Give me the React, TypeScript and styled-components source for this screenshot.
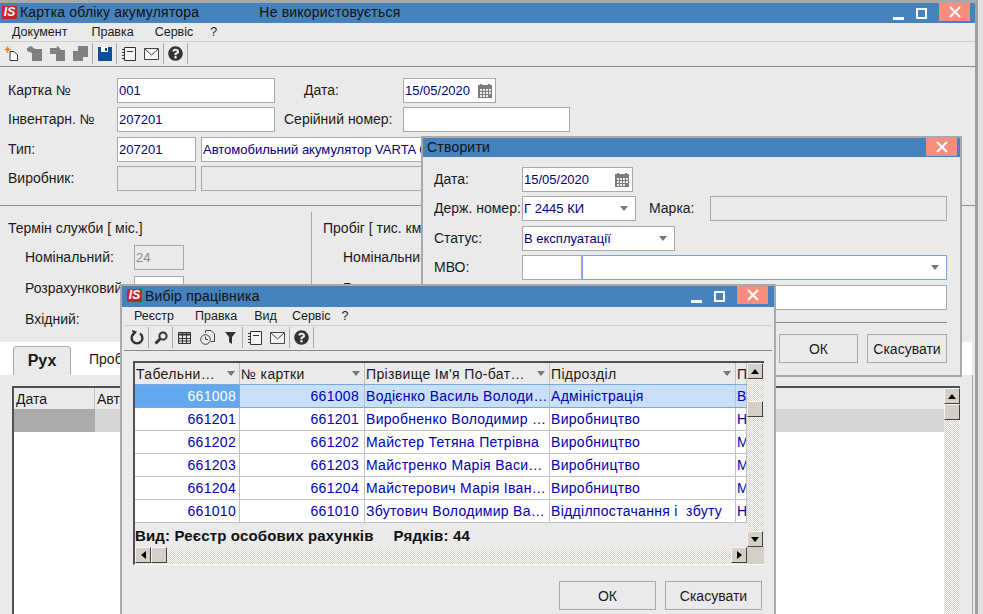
import React from 'react';
import styled, { createGlobalStyle } from 'styled-components';
import { FaQuestionCircle } from 'react-icons/fa';

const GlobalStyle = createGlobalStyle`
  html, body {
    margin: 0;
    padding: 0;
    overflow: hidden;
    background: #e2e2e2;
  }
  * {
    box-sizing: border-box;
  }
`;

const COLUMNS = [105, 125, 185, 186, 11];

const EMPLOYEES = [
  ['661008', '661008', 'Водієнко Василь Володи…', 'Адміністрація', 'В'],
  ['661201', '661201', 'Виробненко Володимир …', 'Виробництво', 'Н'],
  ['661202', '661202', 'Майстер Тетяна Петрівна', 'Виробництво', 'М'],
  ['661203', '661203', 'Майстренко Марія Васи…', 'Виробництво', 'М'],
  ['661204', '661204', 'Майстерович Марія Іван…', 'Виробництво', 'М'],
  ['661010', '661010', 'Збутович Володимир Ва…', 'Відділпостачання і  збуту', 'Н'],
];

const NewIcon = () => (
  <svg width="15" height="15" viewBox="0 0 15 15">
    <path d="M6 5.5H10L13.5 9V14.5H6Z" fill="#fff" stroke="#333" />
    <path d="M3.5 0.5V7M0.5 3.5H7M1.5 1.5L5.5 5.5M5.5 1.5L1.5 5.5" stroke="#e08a1e" strokeWidth="1" />
  </svg>
);

const GreyDocIcon = () => (
  <svg width="15" height="15" viewBox="0 0 15 15">
    <path d="M0 2L4 0L8 3H15V15H5V7L0 5Z" fill="#808080" />
  </svg>
);

const GreyCopyIcon = () => (
  <svg width="15" height="15" viewBox="0 0 15 15">
    <path d="M0 2H6L8 0L11 4H15V15H6V8H0Z" fill="#808080" />
  </svg>
);

const GreyPasteIcon = () => (
  <svg width="15" height="15" viewBox="0 0 15 15">
    <path d="M5 0H15V11H10V15H0V5H5Z" fill="#808080" />
  </svg>
);

const SaveIcon = () => (
  <svg width="14" height="14" viewBox="0 0 14 14">
    <path d="M0 0H14V14H0Z" fill="#0b4f9c" />
    <path d="M3 0H10V5H3Z" fill="#fff" />
    <path d="M7 1H9V4H7Z" fill="#0b4f9c" />
  </svg>
);

const NoteIcon = () => (
  <svg width="14" height="14" viewBox="0 0 14 14" fill="none">
    <path d="M2.5 0.5H13.5V13.5H2.5Z" stroke="#333" fill="#f4f4f4" />
    <path d="M5 4.5H11" stroke="#333" />
    <path d="M0 2.5H3M0 5.5H3M0 8.5H3M0 11.5H3" stroke="#333" />
  </svg>
);

const MailIcon = () => (
  <svg width="15" height="12" viewBox="0 0 15 12" fill="none">
    <path d="M0.5 0.5H14.5V11.5H0.5Z" fill="#f4f4f4" stroke="#444" />
    <path d="M1 1L7.5 7L14 1" stroke="#444" />
  </svg>
);

const HelpIcon = () => <FaQuestionCircle size={15} color="#333" />;

const RefreshIcon = () => (
  <svg width="14" height="15" viewBox="0 0 14 15" fill="none">
    <path d="M4 3.5A5.4 5.4 0 1 0 10 3.5" stroke="#333" strokeWidth="2.4" />
    <path d="M2 0L7 1.5L3.5 6Z" fill="#333" />
  </svg>
);

const SearchIcon = () => (
  <svg width="14" height="14" viewBox="0 0 14 14" fill="none">
    <circle cx="9" cy="5" r="3.6" stroke="#333" strokeWidth="2" />
    <path d="M6 8L1.5 12.5" stroke="#333" strokeWidth="3" />
  </svg>
);

const TableIcon = () => (
  <svg width="13" height="12" viewBox="0 0 13 12" fill="none">
    <path d="M0.5 0.5H12.5V11.5H0.5Z" stroke="#333" />
    <path d="M0 2.5H13" stroke="#333" strokeWidth="2" />
    <path d="M0 6.5H13M0 9H13M4.5 0V12M8.5 0V12" stroke="#333" />
  </svg>
);

const ClockIcon = () => (
  <svg width="15" height="15" viewBox="0 0 15 15" fill="none">
    <path d="M5.5 3V0.5H11L14.5 4V11.5H11" stroke="#444" />
    <circle cx="5.5" cy="9.5" r="4.8" stroke="#444" fill="#eaeaea" />
    <path d="M5.5 6.5V9.5H8" stroke="#444" />
  </svg>
);

const FunnelIcon = () => (
  <svg width="11" height="12" viewBox="0 0 11 12">
    <path d="M0 0H11L7 5V12L4 10V5Z" fill="#333" />
  </svg>
);

const CalendarIcon = () => (
  <svg width="14" height="14" viewBox="0 0 14 14">
    <path d="M0 1H14V14H0Z" fill="#7c7c7c" />
    <path d="M2 0H4V3H2ZM10 0H12V3H10Z" fill="#7c7c7c" />
    <path d="M2 5H4V7H2ZM5 5H7V7H5ZM8 5H10V7H8ZM11 5H13V7H11ZM2 8H4V10H2ZM5 8H7V10H5ZM8 8H10V10H8ZM11 8H13V10H11ZM2 11H4V13H2ZM5 11H7V13H5ZM8 11H10V13H8Z" fill="#eee" />
  </svg>
);

const Desktop = styled.div`
  position: relative;
  width: 983px;
  height: 614px;
  overflow: hidden;
  font-family: "Liberation Sans", Arial, sans-serif;
  font-size: 14px;
  color: #1a1a1a;
`;

const MainWindow = styled.div`
  display: flex;
  flex-direction: column;
  width: 978px;
  height: 614px;
  background: #eaeaea;
  border-top: 3px solid #a9a9a9;
  border-right: 3px solid #a0a0a0;
`;

const FloatingWindow = styled.div<{ $left: number; $top: number; $width: number; $height: number }>`
  position: absolute;
  left: ${(p) => p.$left}px;
  top: ${(p) => p.$top}px;
  width: ${(p) => p.$width}px;
  height: ${(p) => p.$height}px;
  display: flex;
  flex-direction: column;
  background: #eaeaea;
  border: 2px solid #a9a9a9;
`;

const TitleBar = styled.div<{ $height: number; $left: number }>`
  flex: none;
  display: flex;
  align-items: center;
  height: ${(p) => p.$height}px;
  padding: 0 0 2px ${(p) => p.$left}px;
  background: #4682bc;
  color: #111;
  letter-spacing: 0.2px;
`;

const Logo = styled.span`
  flex: none;
  width: 15px;
  height: 13px;
  margin-right: 3px;
  background: #c4242c;
  color: #fff;
  font-size: 12px;
  font-weight: bold;
  font-style: italic;
  letter-spacing: 0;
  line-height: 13px;
  text-align: center;
`;

const Caption = styled.span<{ $gap?: number }>`
  margin-right: ${(p) => p.$gap ?? 0}px;
  white-space: nowrap;
`;

const Controls = styled.div<{ $inset: number }>`
  display: flex;
  align-items: flex-start;
  align-self: flex-start;
  margin-left: auto;
  margin-right: ${(p) => p.$inset}px;
`;

const MinimizeBox = styled.span`
  width: 11px;
  height: 3px;
  margin: 14px 12px 0 0;
  background: #fff;
`;

const MaximizeBox = styled.span`
  width: 11px;
  height: 11px;
  margin: 5px 12px 0 0;
  border: 2px solid #fff;
`;

const CloseBox = styled.span`
  display: flex;
  align-items: center;
  justify-content: center;
  width: 31px;
  height: 18px;
  background: #f98d7b;
`;

const CloseMark = () => (
  <svg width="12" height="12" viewBox="0 0 12 12">
    <path d="M1 1L11 11M11 1L1 11" stroke="#fff" strokeWidth="2" />
  </svg>
);

const MenuBar = styled.div<{ $inset: number; $left: number }>`
  flex: none;
  display: flex;
  align-items: center;
  height: 19px;
  margin: 0 ${(p) => p.$inset}px;
  padding-left: ${(p) => p.$left}px;
  border-bottom: 1px solid #d0d0c8;
  font-size: 12.5px;
`;

const MenuItem = styled.span<{ $after?: number }>`
  margin-right: ${(p) => p.$after ?? 0}px;
`;

const Toolbar = styled.div<{ $inset: number; $left: number }>`
  flex: none;
  display: flex;
  align-items: stretch;
  height: 25px;
  margin: 0 ${(p) => p.$inset}px;
  padding: 1px 0 2px ${(p) => p.$left}px;
  border-bottom: 1px solid #8a8a8a;
`;

const ToolButton = styled.span`
  flex: none;
  display: flex;
  align-items: center;
  justify-content: center;
  width: 23px;
`;

const ToolSeparator = styled.span`
  flex: none;
  width: 1px;
  background: #a9a9a9;
`;

const FormGrid = styled.div`
  flex: none;
  display: grid;
  grid-template-rows: 25px 26px 25px 25px;
  row-gap: 4px;
  height: 139px;
  padding-top: 11px;
  border-bottom: 1px solid #8f8f8f;
`;

const FormRow = styled.div`
  display: flex;
  align-items: flex-start;
`;

const FieldLabel = styled.label<{ $width: number; $indent?: number }>`
  flex: none;
  width: ${(p) => p.$width}px;
  padding-left: ${(p) => p.$indent ?? 0}px;
  line-height: 25px;
  white-space: nowrap;
  overflow: hidden;
`;

const Field = styled.div<{ $width: number; $disabled?: boolean; $focused?: boolean; $gap?: number }>`
  flex: none;
  display: flex;
  align-items: center;
  justify-content: space-between;
  width: ${(p) => p.$width}px;
  height: 25px;
  margin-left: ${(p) => p.$gap ?? 0}px;
  padding: 0 3px 0 1px;
  background: ${(p) => (p.$disabled ? '#eaeaea' : '#fff')};
  border: 1px solid ${(p) => (p.$focused ? '#6fa8dc' : '#a8a8a8')};
  color: ${(p) => (p.$disabled ? '#8a8a8a' : '#000080')};
  font-size: 13px;
  white-space: nowrap;
  overflow: hidden;
`;

const ComboArrow = styled.span`
  flex: none;
  margin-right: 4px;
  border-left: 4px solid transparent;
  border-right: 4px solid transparent;
  border-top: 5px solid #777;
`;

const DetailSplit = styled.div`
  flex: none;
  display: flex;
  height: 136px;
`;

const DetailColumn = styled.section<{ $width: number; $divided?: boolean }>`
  flex: none;
  width: ${(p) => p.$width}px;
  margin-top: 6px;
  padding: 0 0 0 ${(p) => (p.$divided ? 11 : 8)}px;
  border-left: ${(p) => (p.$divided ? '1px solid #a9a9a9' : 'none')};
`;

const DetailTitle = styled.div`
  height: 33px;
  line-height: 32px;
`;

const DetailRow = styled.div`
  display: flex;
  height: 31px;
`;

const TabStrip = styled.div`
  flex: none;
  display: flex;
  align-items: flex-end;
  width: 972px;
  height: 33px;
  padding-left: 13px;
  background: #fff;
`;

const Tab = styled.div<{ $active?: boolean }>`
  width: ${(p) => (p.$active ? 58 : 90)}px;
  height: 29px;
  margin-right: ${(p) => (p.$active ? 18 : 0)}px;
  background: ${(p) => (p.$active ? '#eaeaea' : 'transparent')};
  border: ${(p) => (p.$active ? '1px solid #a9a9a9' : 'none')};
  border-bottom: none;
  border-radius: 4px 4px 0 0;
  font-size: ${(p) => (p.$active ? 16 : 14)}px;
  font-weight: ${(p) => (p.$active ? 'bold' : 'normal')};
  line-height: 27px;
  text-align: ${(p) => (p.$active ? 'center' : 'left')};
`;

const TabPanel = styled.div`
  flex: 1;
  min-height: 0;
  width: 973px;
  padding: 11px 12px 0 12px;
  border-right: 1px solid #a9a9a9;
  overflow: hidden;
`;

const TableFrame = styled.div`
  display: flex;
  height: 320px;
  border-top: 2px solid #505050;
  border-left: 2px solid #505050;
  background: #fff;
`;

const TableBody = styled.div`
  flex: 1;
  min-width: 0;
`;

const BackHeader = styled.div`
  display: flex;
  height: 21px;
  background: #eaeaea;
  line-height: 23px;
`;

const BackHeaderCell = styled.div<{ $width?: number }>`
  flex: ${(p) => (p.$width ? 'none' : '1')};
  width: ${(p) => p.$width ?? 0}px;
  padding-left: 2px;
  border-right: ${(p) => (p.$width ? '1px solid #c4c4c4' : 'none')};
`;

const BackRow = styled.div`
  display: flex;
  height: 23px;
  background: #d6d6d6;
`;

const BackCurrentCell = styled.div`
  width: 81px;
  background: #ababab;
`;

const ScrollTrack = styled.div`
  flex: none;
  background: repeating-conic-gradient(#d4d0c8 0 25%, #fff 0 50%) 0 0 / 2px 2px;
`;

const VerticalTrack = styled(ScrollTrack)<{ $width: number }>`
  display: flex;
  flex-direction: column;
  width: ${(p) => p.$width}px;
`;

const HorizontalTrack = styled(ScrollTrack)`
  display: flex;
  height: 17px;
`;

const TrackGap = styled.span<{ $size?: number }>`
  display: block;
  flex: ${(p) => (p.$size === undefined ? '1' : 'none')};
  height: ${(p) => p.$size ?? 0}px;
`;

const ScrollButton = styled.span`
  flex: none;
  display: flex;
  align-items: center;
  justify-content: center;
  width: 16px;
  height: 16px;
  background: #d4d0c8;
  border: 1px solid;
  border-color: #f4f4f4 #404040 #404040 #f4f4f4;
`;

const ArrowGlyph = styled.span<{ $dir: 'up' | 'down' | 'left' | 'right' }>`
  width: 0;
  height: 0;
  border: 4px solid transparent;
  ${(p) => (p.$dir === 'up' ? 'border-top: none; border-bottom: 5px solid #000;' : '')}
  ${(p) => (p.$dir === 'down' ? 'border-bottom: none; border-top: 5px solid #000;' : '')}
  ${(p) => (p.$dir === 'left' ? 'border-left: none; border-right: 5px solid #000;' : '')}
  ${(p) => (p.$dir === 'right' ? 'border-right: none; border-left: 5px solid #000;' : '')}
`;

const VScroll = ({ offset, width }: { offset: number; width: number }) => (
  <VerticalTrack $width={width}>
    <ScrollButton><ArrowGlyph $dir="up" /></ScrollButton>
    <TrackGap $size={offset} />
    <ScrollButton />
    <TrackGap />
    <ScrollButton><ArrowGlyph $dir="down" /></ScrollButton>
  </VerticalTrack>
);

const PickerGrid = styled.div`
  flex: none;
  display: grid;
  grid-template-columns: 1fr 17px;
  grid-template-rows: 184px 17px;
  width: 631px;
  height: 204px;
  margin: 10px 0 0 11px;
  border-top: 2px solid #505050;
  border-left: 2px solid #505050;
  border-bottom: 1px solid #fff;
`;

const GridContent = styled.div`
  display: flex;
  flex-direction: column;
  min-width: 0;
  overflow: hidden;
`;

const HeaderRow = styled.div`
  flex: none;
  display: flex;
  height: 21px;
  letter-spacing: 0.35px;
`;

const HeaderCell = styled.div<{ $width: number }>`
  flex: none;
  display: flex;
  align-items: center;
  justify-content: space-between;
  width: ${(p) => p.$width}px;
  padding: 0 4px 0 1px;
  border-right: 1px solid #c0c0c0;
  white-space: nowrap;
  overflow: hidden;
`;

const SortArrow = styled.span`
  flex: none;
  border-left: 4px solid transparent;
  border-right: 4px solid transparent;
  border-top: 5px solid #777;
`;

const DataRow = styled.div<{ $current?: boolean }>`
  flex: none;
  display: flex;
  height: ${(p) => (p.$current ? 24 : 23)}px;
  background: ${(p) => (p.$current ? '#c8dff8' : '#fff')};
  border-top: ${(p) => (p.$current ? '1px solid #7da7d9' : 'none')};
  border-bottom: 1px solid ${(p) => (p.$current ? '#7da7d9' : '#c0c0c0')};
`;

const DataCell = styled.div<{ $width: number; $numeric?: boolean; $inset?: number; $selected?: boolean }>`
  flex: none;
  width: ${(p) => p.$width}px;
  padding: ${(p) => (p.$numeric ? `0 ${p.$inset ?? 3}px 0 0` : '0 0 0 1px')};
  background: ${(p) => (p.$selected ? '#64a8f0' : 'transparent')};
  border-right: 1px solid ${(p) => (p.$selected ? '#7da7d9' : '#c0c0c0')};
  color: ${(p) => (p.$selected ? '#fff' : '#0000b4')};
  letter-spacing: 0.3px;
  line-height: 22px;
  text-align: ${(p) => (p.$numeric ? 'right' : 'left')};
  white-space: pre;
  overflow: hidden;
`;

const GridFooter = styled.div`
  flex: none;
  display: flex;
  gap: 20px;
  height: 24px;
  margin-top: auto;
  font-size: 15px;
  font-weight: bold;
  letter-spacing: 0.15px;
  line-height: 26px;
  color: #111;
`;

const GridCorner = styled.div`
  background: #d4d0c8;
`;

const ButtonRow = styled.div<{ $top: number; $right: number }>`
  flex: none;
  display: flex;
  justify-content: flex-end;
  gap: 9px;
  margin-top: ${(p) => p.$top}px;
  padding-right: ${(p) => p.$right}px;
`;

const ActionButton = styled.button<{ $width: number }>`
  width: ${(p) => p.$width}px;
  height: 29px;
  padding: 0;
  background: #eaeaea;
  border: 1px solid #a9a9a9;
  color: #1a1a1a;
  font: inherit;
`;

const DialogGrid = styled.div`
  flex: none;
  display: grid;
  grid-template-rows: 25px 26px 25px 26px 25px;
  row-gap: 4px;
  padding: 10px 0 0 11px;
`;

const DialogDivider = styled.div`
  flex: none;
  height: 1px;
  margin: 12px 13px 0 0;
  background: #8a8a8a;
`;

const App: React.FC = () => {
  return (
    <Desktop>
      <GlobalStyle />
      <MainWindow>
        <TitleBar $height={20} $left={2}>
          <Logo>IS</Logo>
          <Caption $gap={60}>Картка обліку акумулятора</Caption>
          <Caption>Не використовується</Caption>
          <Controls $inset={5}>
            <MinimizeBox />
            <MaximizeBox />
            <CloseBox><CloseMark /></CloseBox>
          </Controls>
        </TitleBar>
        <MenuBar $inset={0} $left={12}>
          <MenuItem $after={24}>Документ</MenuItem>
          <MenuItem $after={21}>Правка</MenuItem>
          <MenuItem $after={17}>Сервіс</MenuItem>
          <MenuItem>?</MenuItem>
        </MenuBar>
        <Toolbar $inset={0} $left={0}>
          <ToolButton><NewIcon /></ToolButton>
          <ToolButton><GreyDocIcon /></ToolButton>
          <ToolButton><GreyCopyIcon /></ToolButton>
          <ToolButton><GreyPasteIcon /></ToolButton>
          <ToolSeparator />
          <ToolButton><SaveIcon /></ToolButton>
          <ToolSeparator />
          <ToolButton><NoteIcon /></ToolButton>
          <ToolButton><MailIcon /></ToolButton>
          <ToolSeparator />
          <ToolButton><HelpIcon /></ToolButton>
          <ToolSeparator />
        </Toolbar>
        <FormGrid>
          <FormRow>
            <FieldLabel $width={117} $indent={8}>Картка №</FieldLabel>
            <Field $width={158}>001</Field>
            <FieldLabel $width={128} $indent={29}>Дата:</FieldLabel>
            <Field $width={93}>15/05/2020 <CalendarIcon /></Field>
          </FormRow>
          <FormRow>
            <FieldLabel $width={117} $indent={8}>Інвентарн. №</FieldLabel>
            <Field $width={158}>207201</Field>
            <FieldLabel $width={128} $indent={9}>Серійний номер:</FieldLabel>
            <Field $width={167} />
          </FormRow>
          <FormRow>
            <FieldLabel $width={117} $indent={8}>Тип:</FieldLabel>
            <Field $width={79}>207201</Field>
            <Field $width={739} $gap={5}>Автомобильний акумулятор VARTA 6</Field>
          </FormRow>
          <FormRow>
            <FieldLabel $width={117} $indent={8}>Виробник:</FieldLabel>
            <Field $width={79} $disabled />
            <Field $width={739} $gap={5} $disabled />
          </FormRow>
        </FormGrid>
        <DetailSplit>
          <DetailColumn $width={311}>
            <DetailTitle>Термін служби [ міс.]</DetailTitle>
            <DetailRow>
              <FieldLabel $width={126} $indent={17}>Номінальний:</FieldLabel>
              <Field $width={50} $disabled>24</Field>
            </DetailRow>
            <DetailRow>
              <FieldLabel $width={126} $indent={17}>Розрахунковий:</FieldLabel>
              <Field $width={50} />
            </DetailRow>
            <DetailRow>
              <FieldLabel $width={126} $indent={17}>Вхідний:</FieldLabel>
              <Field $width={50} />
            </DetailRow>
          </DetailColumn>
          <DetailColumn $width={400} $divided>
            <DetailTitle>Пробіг [ тис. км</DetailTitle>
            <DetailRow>
              <FieldLabel $width={126} $indent={20}>Номінальний:</FieldLabel>
            </DetailRow>
            <DetailRow>
              <FieldLabel $width={126} $indent={20}>Розрахунковий:</FieldLabel>
            </DetailRow>
          </DetailColumn>
        </DetailSplit>
        <TabStrip>
          <Tab $active>Рух</Tab>
          <Tab>Пробіг</Tab>
        </TabStrip>
        <TabPanel>
          <TableFrame>
            <TableBody>
              <BackHeader>
                <BackHeaderCell $width={81}>Дата</BackHeaderCell>
                <BackHeaderCell>Автомобіль</BackHeaderCell>
              </BackHeader>
              <BackRow><BackCurrentCell /></BackRow>
            </TableBody>
            <VScroll offset={0} width={16} />
          </TableFrame>
        </TabPanel>
      </MainWindow>

      <FloatingWindow $left={421} $top={136} $width={541} $height={241}>
        <TitleBar $height={19} $left={4}>
          <Caption>Створити</Caption>
          <Controls $inset={3}>
            <CloseBox><CloseMark /></CloseBox>
          </Controls>
        </TitleBar>
        <DialogGrid>
          <FormRow>
            <FieldLabel $width={88}>Дата:</FieldLabel>
            <Field $width={111}>15/05/2020 <CalendarIcon /></Field>
          </FormRow>
          <FormRow>
            <FieldLabel $width={88}>Держ. номер:</FieldLabel>
            <Field $width={114}>Г 2445 КИ <ComboArrow /></Field>
            <FieldLabel $width={74} $indent={13}>Марка:</FieldLabel>
            <Field $width={237} $disabled />
          </FormRow>
          <FormRow>
            <FieldLabel $width={88}>Статус:</FieldLabel>
            <Field $width={153}>В експлуатації <ComboArrow /></Field>
          </FormRow>
          <FormRow>
            <FieldLabel $width={88}>МВО:</FieldLabel>
            <Field $width={60} />
            <Field $width={365} $focused><span /><ComboArrow /></Field>
          </FormRow>
          <FormRow>
            <FieldLabel $width={88} />
            <Field $width={425} />
          </FormRow>
        </DialogGrid>
        <DialogDivider />
        <ButtonRow $top={11} $right={13}>
          <ActionButton $width={79}>ОК</ActionButton>
          <ActionButton $width={80}>Скасувати</ActionButton>
        </ButtonRow>
      </FloatingWindow>

      <FloatingWindow $left={120} $top={284} $width={656} $height={340}>
        <TitleBar $height={21} $left={5}>
          <Logo>IS</Logo>
          <Caption>Вибір працівника</Caption>
          <Controls $inset={6}>
            <MinimizeBox />
            <MaximizeBox />
            <CloseBox><CloseMark /></CloseBox>
          </Controls>
        </TitleBar>
        <MenuBar $inset={2} $left={10}>
          <MenuItem $after={21}>Реєстр</MenuItem>
          <MenuItem $after={17}>Правка</MenuItem>
          <MenuItem $after={15}>Вид</MenuItem>
          <MenuItem $after={11}>Сервіс</MenuItem>
          <MenuItem>?</MenuItem>
        </MenuBar>
        <Toolbar $inset={2} $left={1}>
          <ToolButton><RefreshIcon /></ToolButton>
          <ToolSeparator />
          <ToolButton><SearchIcon /></ToolButton>
          <ToolSeparator />
          <ToolButton><TableIcon /></ToolButton>
          <ToolButton><ClockIcon /></ToolButton>
          <ToolButton><FunnelIcon /></ToolButton>
          <ToolSeparator />
          <ToolButton><NoteIcon /></ToolButton>
          <ToolButton><MailIcon /></ToolButton>
          <ToolSeparator />
          <ToolButton><HelpIcon /></ToolButton>
          <ToolSeparator />
        </Toolbar>
        <PickerGrid>
          <GridContent>
            <HeaderRow>
              <HeaderCell $width={COLUMNS[0]}>Табельни… <SortArrow /></HeaderCell>
              <HeaderCell $width={COLUMNS[1]}>№ картки <SortArrow /></HeaderCell>
              <HeaderCell $width={COLUMNS[2]}>Прізвище Ім'я По-бат… <SortArrow /></HeaderCell>
              <HeaderCell $width={COLUMNS[3]}>Підрозділ <SortArrow /></HeaderCell>
              <HeaderCell $width={COLUMNS[4]}>П</HeaderCell>
            </HeaderRow>
            {EMPLOYEES.map((row, rowIndex) => (
              <DataRow key={row[0]} $current={rowIndex === 0}>
                {row.map((value, colIndex) => (
                  <DataCell
                    key={colIndex}
                    $width={COLUMNS[colIndex]}
                    $numeric={colIndex < 2}
                    $inset={colIndex === 1 ? 5 : 3}
                    $selected={rowIndex === 0 && colIndex === 0}
                  >
                    {value}
                  </DataCell>
                ))}
              </DataRow>
            ))}
            <GridFooter>
              <span>Вид: Реєстр особових рахунків</span>
              <span>Рядків: 44</span>
            </GridFooter>
          </GridContent>
          <VScroll offset={22} width={17} />
          <HorizontalTrack>
            <ScrollButton><ArrowGlyph $dir="left" /></ScrollButton>
            <ScrollButton />
            <TrackGap />
            <ScrollButton><ArrowGlyph $dir="right" /></ScrollButton>
          </HorizontalTrack>
          <GridCorner />
        </PickerGrid>
        <ButtonRow $top={16} $right={12}>
          <ActionButton $width={97}>ОК</ActionButton>
          <ActionButton $width={97}>Скасувати</ActionButton>
        </ButtonRow>
      </FloatingWindow>
    </Desktop>
  );
};

export default App;
